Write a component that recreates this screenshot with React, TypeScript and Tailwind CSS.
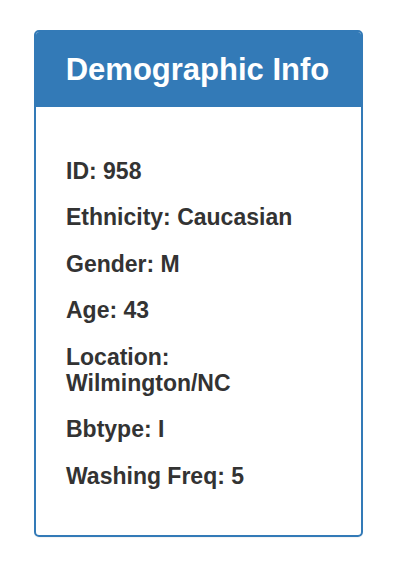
import React from "react";

const items: string[][] = [
  ["ID: 958"],
  ["Ethnicity: Caucasian"],
  ["Gender: M"],
  ["Age: 43"],
  ["Location:", "Wilmington/NC"],
  ["Bbtype: I"],
  ["Washing Freq: 5"],
];

export default function App() {
  return (
    <div
      className="w-[418px] h-[584px] bg-white pt-[30px] pl-[34px]"
      style={{ fontFamily: '"Liberation Sans", Arial, sans-serif' }}
    >
      <div className="w-[329px] h-[507px] border-2 border-[#337ab7] rounded-[5px] overflow-hidden shadow-[0_1px_1px_rgba(0,0,0,0.05)] flex flex-col">
        <div className="h-[75px] bg-[#337ab7] flex items-center justify-center">
          <h3 className="text-[31px] leading-[35px] font-bold text-white pr-[2px]">Demographic Info</h3>
        </div>
        <div className="pl-[30px] pt-[51px] flex flex-col gap-[20px] text-[#333333]">
          {items.map((lines, i) => (
            <h4 key={i} className="text-[23px] leading-[26.4px] font-bold">
              {lines.map((l, j) => (
                <div key={j}>{l}</div>
              ))}
            </h4>
          ))}
        </div>
      </div>
    </div>
  );
}
